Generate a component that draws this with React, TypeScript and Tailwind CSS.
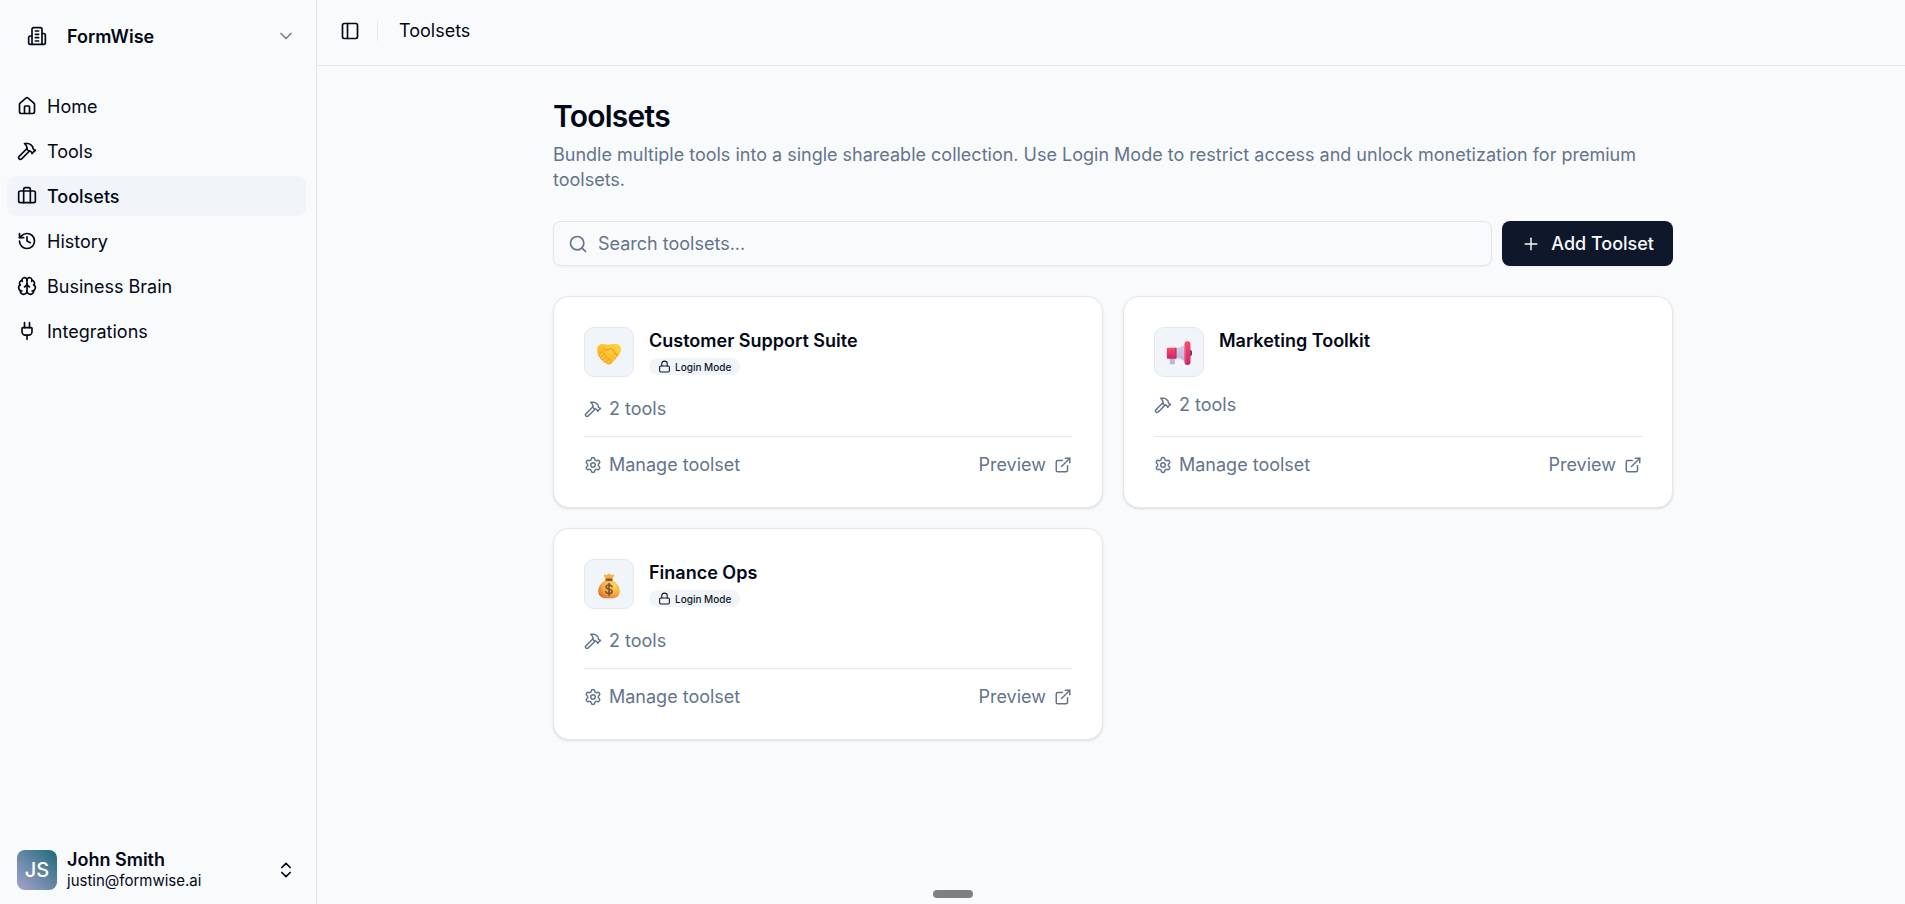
import type { ReactNode } from 'react';
import {
  Brain,
  ChevronDown,
  ChevronsUpDown,
  ExternalLink,
  Hammer,
  History,
  House,
  Lock,
  PanelLeft,
  Plug,
  Plus,
  Search,
  Settings,
} from 'lucide-react';

function BuildingIcon() {
  return (
    <svg
      className="size-5"
      viewBox="0 0 24 24"
      fill="none"
      stroke="currentColor"
      strokeWidth="2"
      strokeLinecap="round"
      strokeLinejoin="round"
      aria-hidden="true"
    >
      <path d="M6 22V4a2 2 0 0 1 2-2h8a2 2 0 0 1 2 2v18Z" />
      <path d="M6 12H4a2 2 0 0 0-2 2v6a2 2 0 0 0 2 2h2" />
      <path d="M18 9h2a2 2 0 0 1 2 2v9a2 2 0 0 1-2 2h-2" />
      <path d="M10 6h4M10 10h4M10 14h4M10 18h4" />
    </svg>
  );
}

function LuggageIcon() {
  return (
    <svg
      className="size-5"
      viewBox="0 0 24 24"
      fill="none"
      stroke="currentColor"
      strokeWidth="2"
      strokeLinecap="round"
      strokeLinejoin="round"
      aria-hidden="true"
    >
      <path d="M16 20V4a2 2 0 0 0-2-2h-4a2 2 0 0 0-2 2v16" />
      <rect width="20" height="14" x="2" y="6" rx="2" />
    </svg>
  );
}

function Handshake() {
  return (
    <svg className="size-7" viewBox="0 0 28 28" aria-hidden="true">
      <defs>
        <linearGradient id="hand-back" x1="0" y1="0" x2="0" y2="1">
          <stop offset="0" stopColor="#ffc62f" />
          <stop offset="1" stopColor="#f3a11f" />
        </linearGradient>
        <linearGradient id="hand-front" x1="1" y1="0" x2="0" y2="1">
          <stop offset="0" stopColor="#ffd53e" />
          <stop offset="1" stopColor="#f9b52a" />
        </linearGradient>
      </defs>
      <path
        d="M2.2 9.2C2.3 6 4.6 3.6 7.6 4c1.9.2 4.100.7 6.400.7 2.300 0 4.500-.5 6.400-.7 3-.4 5.300 2 5.400 5.200.1 2.700-1.300 4.800-2.900 6.700l-6 7c-.9 1-2 1.800-3.100 1.200L4 15.800C2.700 13.800 2.100 11.600 2.200 9.200Z"
        fill="url(#hand-back)"
      />
      <path
        d="M8.500 8.600c1.500-2.300 4-3.900 6.700-4.200l5-.5c3.200-.3 5.500 2.200 5.600 5.300.1 2.600-1.300 4.700-2.900 6.600l-5.700 6.800c-1.300 1.500-3.400 2.600-4.700 1.200L6 18.200c-2-2-1.500-5 .8-5.700l5-1.900c-1.400.7-3.700-.3-3.300-2Z"
        fill="url(#hand-front)"
      />
      <path
        d="M8.700 8.300c.5 2 3.300 2.200 5 1.100l2.200-1.200 6.700 7.300"
        fill="none"
        stroke="#e9941d"
        strokeWidth="1"
        strokeLinecap="round"
      />
      <g fill="#ffc331" stroke="#e58d20" strokeWidth=".6">
        <rect x="3.400" y="12.800" width="6" height="3.800" rx="1.900" transform="rotate(-46 6.400 14.700)" />
        <rect x="5.400" y="15.600" width="6" height="3.800" rx="1.900" transform="rotate(-46 8.400 17.500)" />
        <rect x="8" y="18" width="5.600" height="3.600" rx="1.800" transform="rotate(-46 10.800 19.800)" />
        <rect x="11.200" y="20.200" width="4.800" height="3.300" rx="1.600" transform="rotate(-46 13.600 21.800)" />
      </g>
      <path
        d="m15 18 2.700 2.900M17 15.600l3.300 3M18.800 13.200l3.400 2.700"
        fill="none"
        stroke="#eda023"
        strokeWidth=".8"
        strokeLinecap="round"
      />
    </svg>
  );
}

function Megaphone() {
  return (
    <svg className="size-7" viewBox="0 0 28 28" aria-hidden="true">
      <defs>
        <linearGradient id="horn-cone" x1="0" y1="0" x2="0" y2="1">
          <stop offset="0" stopColor="#d9d9de" />
          <stop offset="1" stopColor="#bdaed6" />
        </linearGradient>
        <linearGradient id="horn-red" x1="0" y1="0" x2="0" y2="1">
          <stop offset="0" stopColor="#ff4a63" />
          <stop offset="1" stopColor="#c9256f" />
        </linearGradient>
      </defs>
      <path d="M4.800 17h5v6.200a1 1 0 0 1-1 1h-3a1 1 0 0 1-1-1Z" fill="#c2b3da" />
      <path d="M11 8.200c4-.5 7.500-2.500 10-5.200v19.500c-2.500-2.500-6-4.500-10-5Z" fill="url(#horn-cone)" />
      <path d="M2.800 7.800h8.400v11H2.800a1 1 0 0 1-1-1v-9a1 1 0 0 1 1-1Z" fill="url(#horn-red)" />
      <path d="M10 7.800h1.500v11H10Z" fill="#c42f88" />
      <ellipse cx="25" cy="13" rx="2" ry="3.200" fill="#4a3a56" />
      <rect x="19.500" y="1.200" width="6" height="23.800" rx="3" fill="url(#horn-red)" />
      <path d="M21 3.500c-.6 5-.6 14 0 19" fill="none" stroke="#ff5c80" strokeWidth=".8" />
    </svg>
  );
}

function MoneyBag() {
  return (
    <svg className="size-7" viewBox="0 0 28 28" aria-hidden="true">
      <defs>
        <radialGradient id="bag" cx=".7" cy=".3" r=".85">
          <stop offset="0" stopColor="#ffd45a" />
          <stop offset=".55" stopColor="#f9ae43" />
          <stop offset="1" stopColor="#d9672f" />
        </radialGradient>
      </defs>
      <path
        d="M10.200 2.800c1.200.9 1.900.1 2.700-.7.600-.6 1.500-.6 2.100 0 .8.8 1.600 1.600 2.800.7 1-.6 1.700.3 1.200 1.200L16.800 8h-5.600L9 4c-.5-.9.200-1.800 1.200-1.200Z"
        fill="#f8b13e"
      />
      <path
        d="M11 8h6c4.600 2.500 7.800 6.600 7.800 11 0 5-3.500 7.300-8.300 7.300h-5c-4.800 0-8.300-2.300-8.300-7.300C3.200 14.600 6.400 10.500 11 8Z"
        fill="url(#bag)"
      />
      <rect x="10.400" y="6.500" width="7.200" height="2.500" rx="1.200" fill="#87533f" />
      <path
        d="M17 14.700c-.5-1.200-1.600-1.700-3-1.700-1.700 0-2.900.8-2.900 2.100 0 3 6 1.300 6 4.300 0 1.400-1.300 2.200-3.100 2.200-1.600 0-2.800-.7-3.200-1.900M14 11.500v11.700"
        fill="none"
        stroke="#80503b"
        strokeWidth="1.700"
        strokeLinecap="round"
      />
    </svg>
  );
}

const navItems: { label: string; icon: ReactNode; active?: boolean }[] = [
  { label: 'Home', icon: <House className="size-5" /> },
  { label: 'Tools', icon: <Hammer className="size-5" /> },
  { label: 'Toolsets', icon: <LuggageIcon />, active: true },
  { label: 'History', icon: <History className="size-5" /> },
  { label: 'Business Brain', icon: <Brain className="size-5" /> },
  { label: 'Integrations', icon: <Plug className="size-5" /> },
];

const toolsets: { name: string; icon: ReactNode; login: boolean; count: number }[] = [
  { name: 'Customer Support Suite', icon: <Handshake />, login: true, count: 2 },
  { name: 'Marketing Toolkit', icon: <Megaphone />, login: false, count: 2 },
  { name: 'Finance Ops', icon: <MoneyBag />, login: true, count: 2 },
];

function Sidebar() {
  return (
    <aside className="flex w-[317px] shrink-0 flex-col border-r border-gray-200 pr-[10px] pl-[7px]">
      <button type="button" className="mt-2 flex h-14 items-center gap-[10px] rounded-lg px-[10px] text-left">
        <span className="flex size-10 items-center justify-center">
          <BuildingIcon />
        </span>
        <span className="flex-1 font-semibold">FormWise</span>
        <ChevronDown className="size-5 opacity-50" />
      </button>
      <nav className="mt-[22px] flex flex-col gap-[5px]">
        {navItems.map((item) => (
          <a
            key={item.label}
            href="#"
            aria-current={item.active ? 'page' : undefined}
            className={
              item.active
                ? 'flex h-10 items-center gap-[10px] rounded-lg bg-slate-100 px-[10px] font-medium'
                : 'flex h-10 items-center gap-[10px] rounded-lg px-[10px]'
            }
          >
            {item.icon}
            {item.label}
          </a>
        ))}
      </nav>
      <button type="button" className="mt-auto mb-[6px] flex h-14 items-center gap-[10px] rounded-lg px-[10px] text-left">
        <span className="flex size-10 items-center justify-center rounded-lg bg-linear-to-bl from-[#0c6a78] to-[#a4a3d0] text-xl font-medium text-white">
          JS
        </span>
        <span className="flex min-w-0 flex-1 flex-col">
          <span className="leading-[22px] font-semibold">John Smith</span>
          <span className="text-[15px] leading-5">justin@formwise.ai</span>
        </span>
        <ChevronsUpDown className="size-5" />
      </button>
    </aside>
  );
}

function ToolsetCard({ name, icon, login, count }: (typeof toolsets)[number]) {
  return (
    <article className="flex flex-col rounded-2xl border border-gray-200 bg-white p-[30px] shadow-sm">
      <div className="flex gap-[15px]">
        <div className="flex size-[50px] shrink-0 items-center justify-center rounded-[10px] border border-gray-200 bg-slate-100 pt-[3px]">
          {icon}
        </div>
        <div className="pt-px">
          <h2 className="font-semibold">{name}</h2>
          {login && (
            <span className="mt-[5px] mb-[6px] flex h-[17px] w-fit items-center gap-1 rounded-full bg-slate-100 px-[9px] text-[10px] leading-none font-medium text-slate-900">
              <Lock className="size-[13px]" />
              Login Mode
            </span>
          )}
        </div>
      </div>
      <p className="mt-[15px] mb-[15px] flex items-center gap-[7px] text-[#64748b]">
        <Hammer className="size-[18px]" />
        {count} tools
      </p>
      <div className="mt-auto flex items-center justify-between border-t border-slate-200 pt-[15px] text-[#64748b]">
        <a href="#" className="flex items-center gap-[7px]">
          <Settings className="size-[18px]" />
          Manage toolset
        </a>
        <a href="#" className="flex items-center gap-2">
          Preview
          <ExternalLink className="size-[18px]" />
        </a>
      </div>
    </article>
  );
}

export default function App() {
  return (
    <div className="relative flex min-h-screen bg-slate-50 font-['Inter',sans-serif] text-[18px] leading-[25px] text-[#020817]">
      <Sidebar />
      <div className="flex min-w-0 flex-1 flex-col">
        <header className="flex h-[66px] items-center border-b border-gray-200 px-[23px] pb-1">
          <button type="button" aria-label="Toggle sidebar" className="flex size-5 items-center justify-center">
            <PanelLeft className="size-5" />
          </button>
          <span className="mr-[21px] ml-[17px] h-5 w-px bg-gray-200" />
          <span>Toolsets</span>
        </header>
        <main className="pt-8 pl-1">
          <div className="mx-auto max-w-[1120px]">
            <h1 className="text-[30px] leading-9 font-semibold tracking-tight">Toolsets</h1>
            <p className="mt-2 text-[#64748b]">
              Bundle multiple tools into a single shareable collection. Use Login Mode to restrict access and unlock
              monetization for premium toolsets.
            </p>
            <div className="mt-[29px] flex gap-[10px]">
              <label className="flex h-[45px] flex-1 items-center gap-[10px] rounded-lg border border-slate-200 px-[14px] text-[#64748b] shadow-xs">
                <Search className="size-5" />
                <input
                  type="search"
                  aria-label="Search toolsets"
                  placeholder="Search toolsets..."
                  className="min-w-0 flex-1 bg-transparent outline-none placeholder:text-[#64748b]"
                />
              </label>
              <button
                type="button"
                className="flex h-[45px] items-center gap-[10px] rounded-lg bg-slate-900 px-[19px] font-medium text-slate-50 shadow-xs"
              >
                <Plus className="size-5" strokeWidth={1.75} />
                Add Toolset
              </button>
            </div>
            <section className="mt-[30px] grid grid-cols-2 gap-5" aria-label="Toolsets">
              {toolsets.map((toolset) => (
                <ToolsetCard key={toolset.name} {...toolset} />
              ))}
            </section>
          </div>
        </main>
      </div>
      <div className="absolute bottom-[6px] left-1/2 h-2 w-10 -translate-x-1/2 rounded-full bg-[#7f8081]" />
    </div>
  );
}
